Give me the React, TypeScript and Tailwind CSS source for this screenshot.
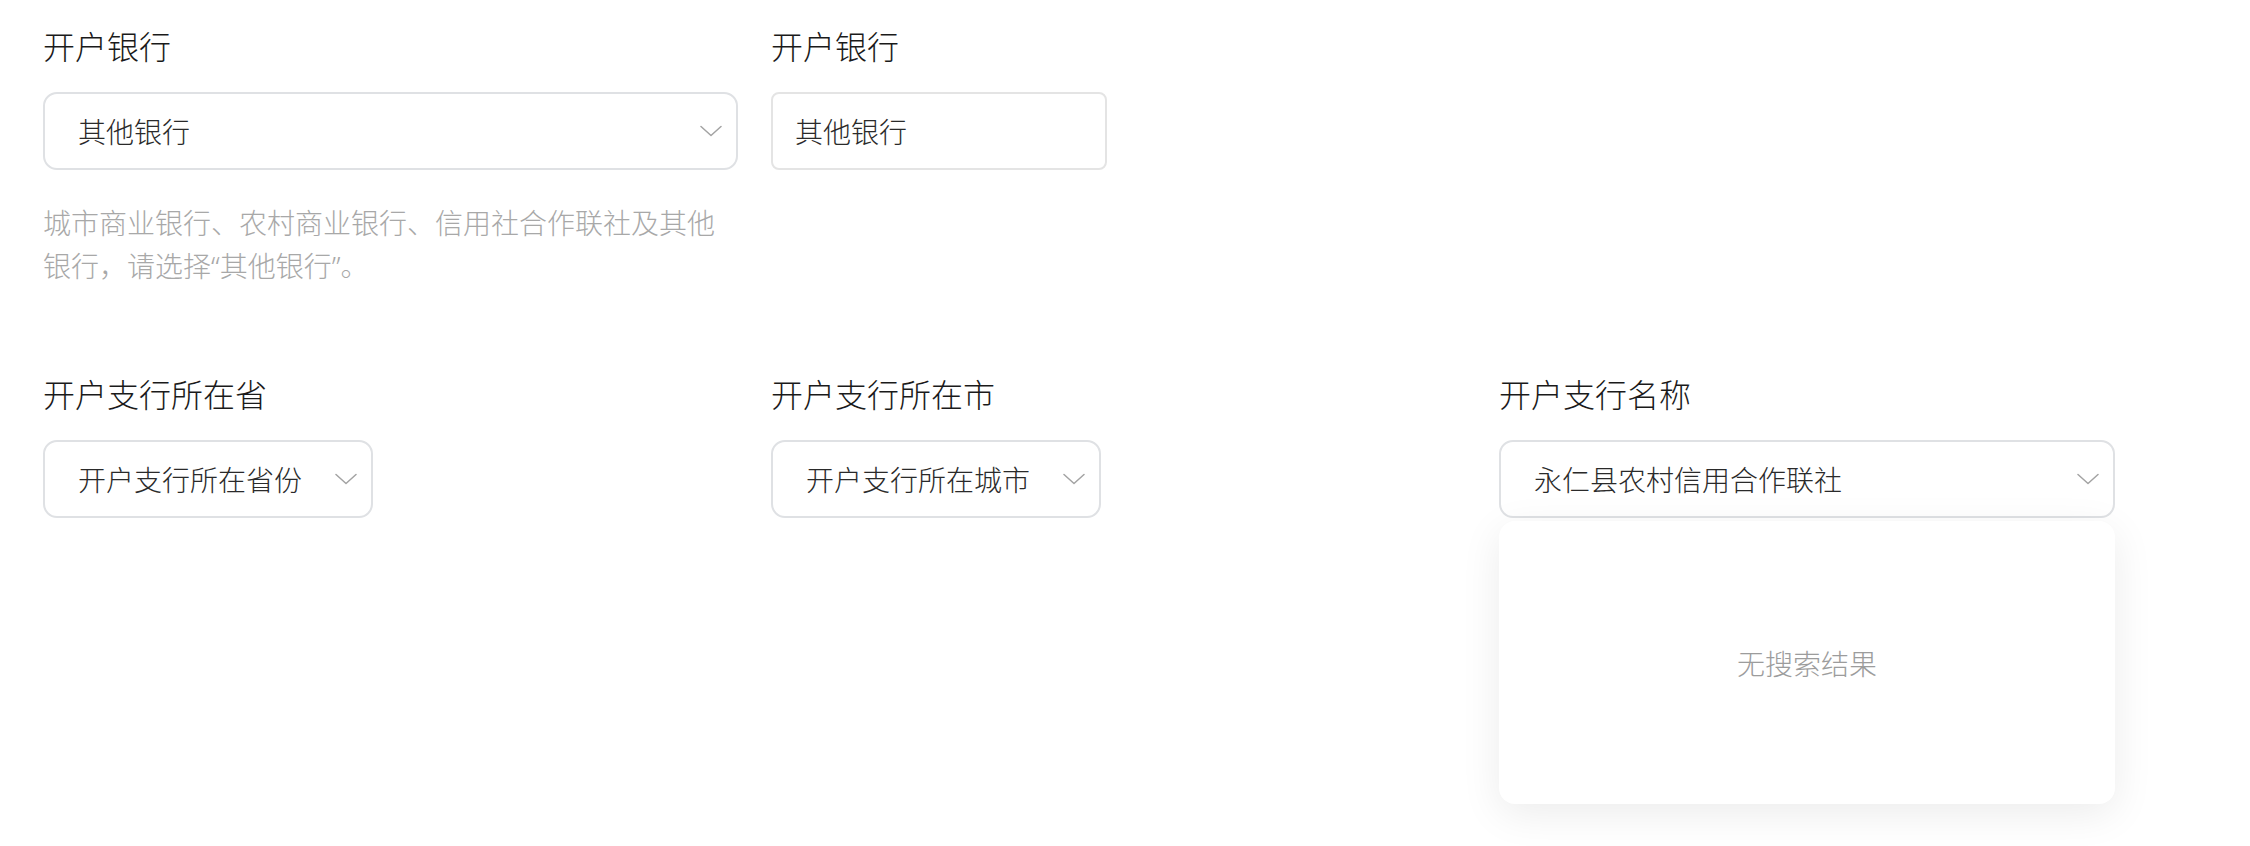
import { ReactNode } from 'react';

const font = { fontFamily: '"Noto Sans CJK SC", "Noto Sans", sans-serif' };
// Latin font first so the curly quotes come out narrow; CJK glyphs fall through
const hintFont = { fontFamily: '"Noto Sans", "Noto Sans CJK SC", sans-serif' };

function Chevron() {
  return (
    <svg width="22" height="12" viewBox="0 0 22 12" fill="none" className="shrink-0">
      <path d="M1 1.5 L11 10.5 L21 1.5" stroke="#a3a3a3" strokeWidth="1.5" strokeLinecap="round" strokeLinejoin="round" />
    </svg>
  );
}

function Field({ label, children }: { label: string; children: ReactNode }) {
  return (
    <div className="flex flex-col">
      <div className="text-[32px] leading-[45px] text-[#1a1a1a] font-light mb-[24px]">{label}</div>
      {children}
    </div>
  );
}

function Select({ value, width }: { value: string; width: string }) {
  return (
    <div
      className={`${width} h-[78px] flex items-center justify-between pl-[33px] pr-[14px] border-2 border-[#dfe1e4] rounded-[14px] bg-white`}
    >
      <span className="text-[28px] text-[#2a2a2a] font-light whitespace-nowrap">{value}</span>
      <Chevron />
    </div>
  );
}

export default function App() {
  return (
    <div style={font} className="min-h-[846px] bg-white px-[43px] pt-[23px]">
      <div className="grid grid-cols-[695px_695px_695px] gap-x-[33px]">
        <Field label="开户银行">
          <Select value="其他银行" width="w-[695px]" />
          <p style={hintFont} className="mt-[32px] text-[28px] leading-[43px] font-light text-[#a8a8a8]">
            城市商业银行、农村商业银行、信用社合作联社及其他银行，请选择“其他银行”。
          </p>
        </Field>
        <Field label="开户银行">
          <div className="w-[336px] h-[78px] flex items-center px-[22px] border-2 border-[#e4e4e4] rounded-[8px]">
            <span className="text-[28px] text-[#2a2a2a] font-light">其他银行</span>
          </div>
        </Field>
        <div />
      </div>

      <div className="grid grid-cols-[695px_695px_695px] gap-x-[33px] mt-[83px]">
        <Field label="开户支行所在省">
          <Select value="开户支行所在省份" width="w-[330px]" />
        </Field>
        <Field label="开户支行所在市">
          <Select value="开户支行所在城市" width="w-[330px]" />
        </Field>
        <Field label="开户支行名称">
          <div className="relative w-[616px]">
            <Select value="永仁县农村信用合作联社" width="w-[616px]" />
            <div className="absolute left-0 top-[81px] w-[616px] h-[283px] bg-white rounded-[16px] shadow-[0_10px_40px_rgba(0,0,0,0.08)] flex items-center justify-center">
              <span className="text-[28px] text-[#9c9c9c] font-light">无搜索结果</span>
            </div>
          </div>
        </Field>
      </div>
    </div>
  );
}
